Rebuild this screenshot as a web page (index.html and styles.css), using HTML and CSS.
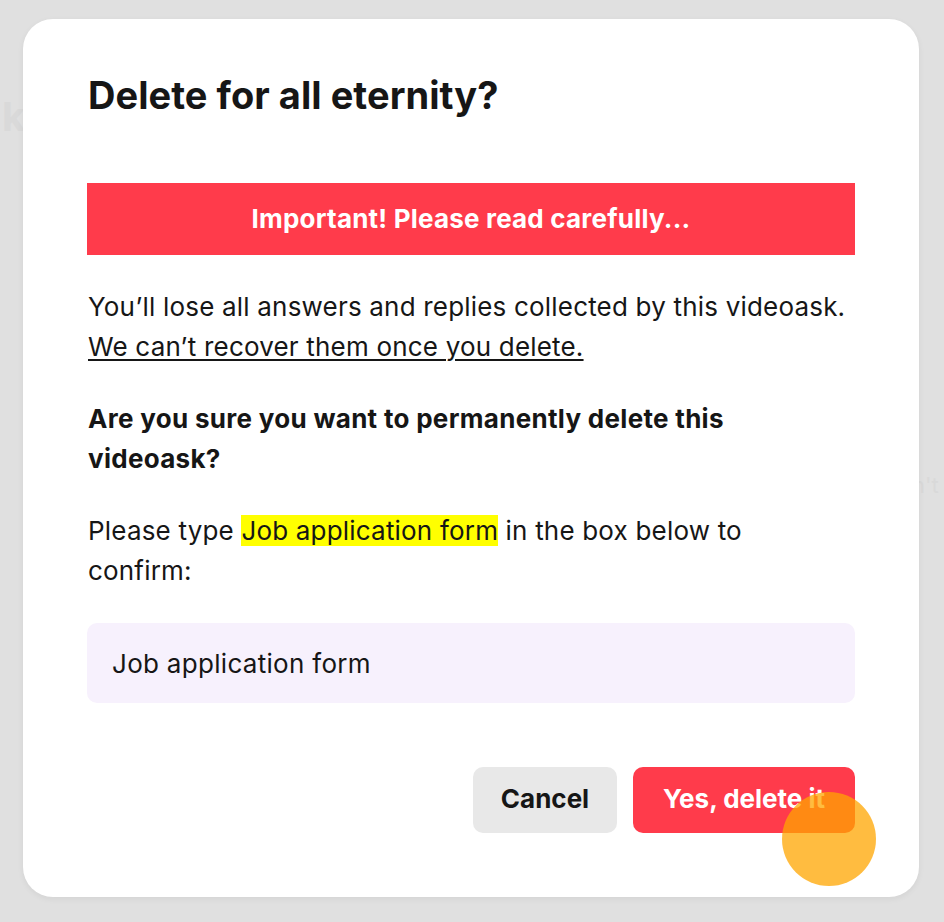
FILE: index.html
```html
<!DOCTYPE html>
<html lang="en">
<head>
<meta charset="utf-8">
<title>Delete for all eternity?</title>
<link rel="stylesheet" href="styles.css">
</head>
<body>
<div class="backdrop">
  <span class="ghost ghost-left">k</span>
  <span class="ghost ghost-right">n't fi</span>
</div>
<div class="stage">
  <div class="modal">
    <h1 class="title">Delete for all eternity?</h1>
    <div class="banner">Important! Please read carefully...</div>
    <p class="text">You’ll lose all answers and replies collected by this videoask. <span class="underline">We can’t recover them once you delete.</span></p>
    <p class="text strong">Are you sure you want to permanently delete this videoask?</p>
    <p class="text">Please type <span class="mark">Job application form</span> in the box below to confirm:</p>
    <div class="field">Job application form</div>
    <div class="actions">
      <button class="btn btn-cancel">Cancel</button>
      <button class="btn btn-delete">Yes, delete it<span class="cursor"></span></button>
    </div>
  </div>
</div>
</body>
</html>
```

FILE: styles.css
```css
* { box-sizing: border-box; }
html, body {
  margin: 0;
  padding: 0;
}
body {
  background: #e0e0e0;
  width: 944px;
  height: 922px;
  overflow: hidden;
  position: relative;
  font-family: Inter, "Noto Sans", "Liberation Sans", sans-serif;
  color: #161616;
}
.backdrop {
  position: absolute;
  inset: 0;
}
.ghost {
  position: absolute;
  color: #d9d9d9;
  font-weight: 700;
  white-space: nowrap;
}
.ghost-left {
  left: 2px;
  top: 92px;
  font-size: 40px;
}
.ghost-right {
  left: 912px;
  top: 472px;
  font-size: 22px;
  font-weight: 400;
}
.stage {
  position: relative;
  padding: 19px 25px 25px 23px;
}
.modal {
  background: #fff;
  border-radius: 30px;
  padding: 53px 64px 64px 64px;
  height: 878px;
  box-shadow: 0 2px 6px rgba(0,0,0,0.06);
}
.title {
  margin: 0;
  font-size: 38px;
  line-height: 46px;
  font-weight: 700;
  letter-spacing: 0.05px;
  padding-left: 1px;
}
.banner {
  margin-top: 65px;
  height: 72px;
  line-height: 72px;
  background: #ff3b4b;
  color: #fff;
  font-weight: 700;
  font-size: 26px;
  letter-spacing: 0.2px;
  text-align: center;
}
.text {
  margin: 32px 0 0 0;
  font-size: 26px;
  line-height: 40px;
  padding-left: 1px;
  padding-right: 7px;
  letter-spacing: 0.19px;
}
.strong {
  font-weight: 700;
  letter-spacing: 0.3px;
}
.underline {
  text-decoration: underline;
  text-decoration-thickness: 2px;
  text-underline-offset: 3px;
}
.mark {
  background: #ffff00;
}
.field {
  margin-top: 32px;
  height: 80px;
  border-radius: 10px;
  background: #f7f1fd;
  padding: 0 25px;
  display: flex;
  align-items: center;
  font-size: 26px;
  letter-spacing: 0.3px;
}
.actions {
  margin-top: 64px;
  display: flex;
  justify-content: flex-end;
  gap: 16px;
}
.btn {
  font-family: inherit;
  border: none;
  height: 66px;
  border-radius: 10px;
  font-size: 26px;
  font-weight: 700;
  padding: 0 0 4px 0;
  position: relative;
}
.btn-cancel {
  width: 144px;
  background: #e8e8e8;
  color: #161616;
}
.btn-delete {
  width: 222px;
  background: #ff3b4b;
  color: #fff;
}
.cursor {
  position: absolute;
  left: 149px;
  top: 25px;
  width: 94px;
  height: 94px;
  border-radius: 50%;
  background: rgba(255, 166, 0, 0.75);
}
```
